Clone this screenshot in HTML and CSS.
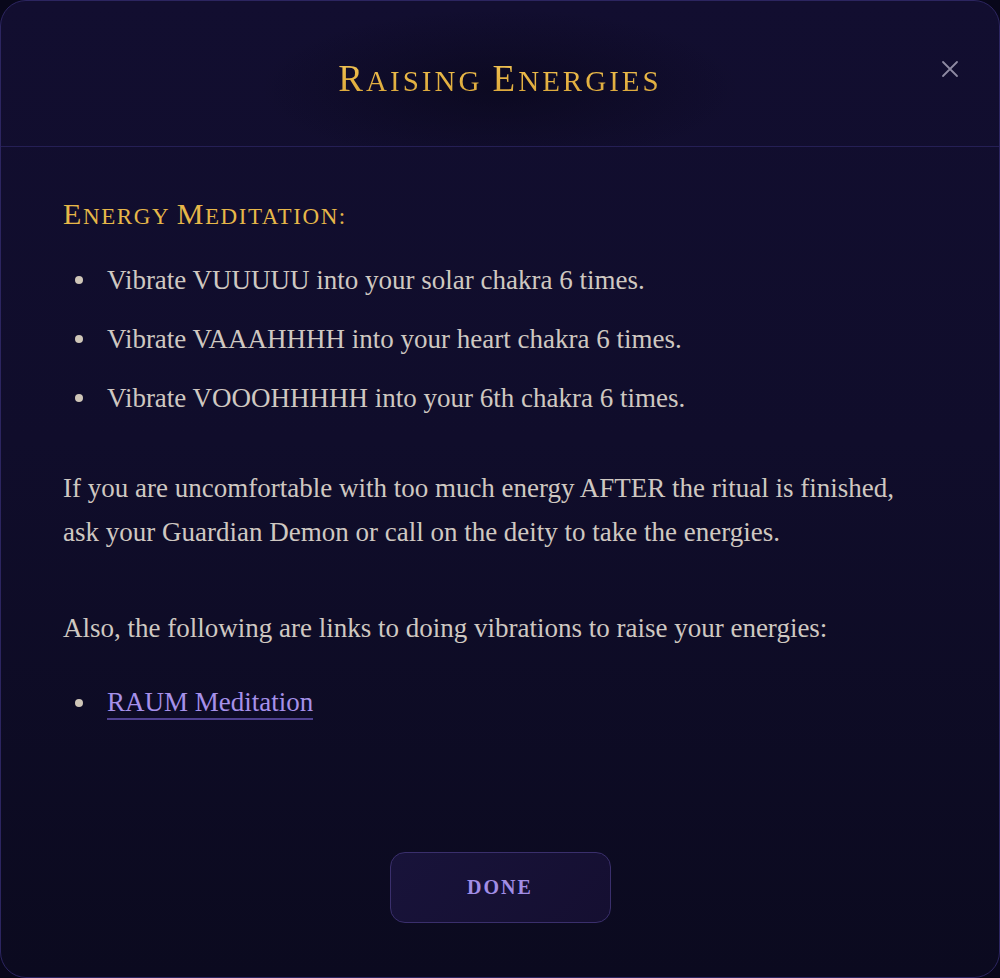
FILE: index.html
```html
<!DOCTYPE html>
<html lang="en">
<head>
<meta charset="utf-8">
<title>Raising Energies</title>
<link rel="stylesheet" href="styles.css">
</head>
<body>
<div class="modal">
  <header class="modal-header">
    <h1 class="title"><span class="cap">R</span>aising <span class="cap">E</span>nergies</h1>
    <button class="close" aria-label="Close">
      <svg width="18" height="18" viewBox="0 0 18 18"><path d="M2 2 L16 16 M16 2 L2 16" stroke="#8e8aa2" stroke-width="1.8" stroke-linecap="round"/></svg>
    </button>
  </header>
  <main class="modal-body">
    <h2 class="section-title"><span class="cap">E</span>nergy <span class="cap">M</span>editation:</h2>
    <ul class="steps">
      <li>Vibrate VUUUUU into your solar chakra 6 times.</li>
      <li>Vibrate VAAAHHHH into your heart chakra 6 times.</li>
      <li>Vibrate VOOOHHHHH into your 6th chakra 6 times.</li>
    </ul>
    <p class="para">If you are uncomfortable with too much energy AFTER the ritual is finished, ask your Guardian Demon or call on the deity to take the energies.</p>
    <p class="para para-links">Also, the following are links to doing vibrations to raise your energies:</p>
    <ul class="links">
      <li><a href="#" class="link">RAUM Meditation</a></li>
    </ul>
  </main>
  <footer class="modal-footer">
    <button class="done">DONE</button>
  </footer>
</div>
</body>
</html>
```

FILE: styles.css
```css
html, body {
  margin: 0;
  padding: 0;
  background: #08071a;
}

.modal {
  box-sizing: border-box;
  width: 1000px;
  height: 978px;
  border: 1px solid #2c2560;
  border-radius: 26px;
  background: linear-gradient(180deg, #120e30 0%, #100d2b 45%, #0b0a1f 100%);
  display: flex;
  flex-direction: column;
  overflow: hidden;
  font-family: "Liberation Serif", "DejaVu Serif", serif;
}

.modal-header {
  position: relative;
  height: 146px;
  box-sizing: border-box;
  border-bottom: 1px solid #251f55;
  display: flex;
  align-items: center;
  justify-content: center;
  background: radial-gradient(ellipse 240px 80px at 50% 60%, rgba(8, 6, 24, 0.6), rgba(8, 6, 24, 0) 100%);
}

.title {
  margin: 0;
  padding-top: 10px;
  font-size: 29px;
  font-weight: normal;
  text-transform: uppercase;
  letter-spacing: 3px;
  color: #ebbc4c;
  background: linear-gradient(180deg, #f6d068 0%, #e8b645 55%, #d7a43a 100%);
  -webkit-background-clip: text;
  background-clip: text;
  -webkit-text-fill-color: transparent;
}

.title .cap {
  font-size: 37px;
}

.close {
  position: absolute;
  right: 40px;
  top: 59px;
  width: 18px;
  height: 18px;
  padding: 0;
  border: 0;
  background: none;
  display: flex;
}

.modal-body {
  flex: 1;
  padding: 49px 70px 0 62px;
  color: #cfc8c1;
}

.section-title {
  margin: 0;
  font-size: 23px;
  line-height: 36px;
  font-weight: normal;
  text-transform: uppercase;
  letter-spacing: 1.6px;
  color: #e6b749;
}

.section-title .cap {
  font-size: 30px;
}

.steps, .links {
  list-style: none;
  margin: 0;
  padding: 0;
}

.steps {
  margin-top: 23px;
  display: flex;
  flex-direction: column;
  gap: 15px;
}

.steps li, .links li {
  display: flex;
  align-items: center;
  font-size: 27px;
  line-height: 44px;
}

.steps li::before, .links li::before {
  content: "";
  width: 8px;
  height: 8px;
  border-radius: 50%;
  background: #cfc6b8;
  margin-left: 12px;
  margin-right: 24px;
  flex: none;
}

.para {
  margin: 46px 0 0 0;
  font-size: 27px;
  line-height: 44px;
}

.para-links {
  margin-top: 52px;
}

.links {
  margin-top: 36px;
}

.link {
  color: #a691ea;
  text-decoration: none;
  border-bottom: 2px solid #4f4190;
  line-height: 32px;
  display: inline-block;
}

.modal-footer {
  display: flex;
  justify-content: center;
  padding-bottom: 54px;
}

.done {
  width: 221px;
  height: 71px;
  box-sizing: border-box;
  border: 1px solid #3a2f6c;
  border-radius: 15px;
  background: linear-gradient(135deg, #18133a, #150f31);
  color: #a18de6;
  font-family: "Liberation Serif", "DejaVu Serif", serif;
  font-size: 20px;
  font-weight: bold;
  letter-spacing: 2px;
}
```
